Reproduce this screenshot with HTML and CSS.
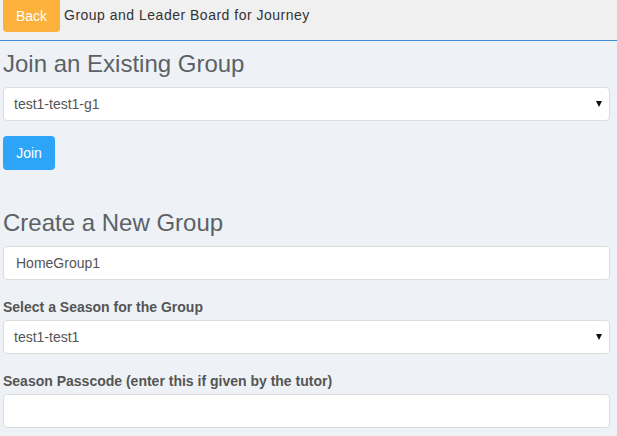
FILE: index.html
```html
<!DOCTYPE html>
<html>
<head>
<meta charset="utf-8">
<link rel="stylesheet" href="styles.css">
</head>
<body>
<header class="topbar">
  <button class="btn btn-back">Back</button>
  <span class="title">Group and Leader Board for Journey</span>
</header>
<main class="content">
  <h2 class="heading">Join an Existing Group</h2>
  <div class="select-wrap">
    <div class="select-box">test1-test1-g1</div>
    <span class="caret"></span>
  </div>
  <button class="btn btn-join">Join</button>

  <h2 class="heading heading-create">Create a New Group</h2>
  <div class="input-box">HomeGroup1</div>

  <label class="label">Select a Season for the Group</label>
  <div class="select-wrap">
    <div class="select-box">test1-test1</div>
    <span class="caret"></span>
  </div>

  <label class="label">Season Passcode (enter this if given by the tutor)</label>
  <div class="input-box"></div>
</main>
</body>
</html>
```
FILE: styles.css
```css
* { box-sizing: border-box; }
html, body {
  margin: 0;
  padding: 0;
  background: #eef2f6;
  font-family: "Liberation Sans", Arial, sans-serif;
  height: 436px;
  overflow: hidden;
}
.topbar {
  height: 41px;
  background: #f0f0f0;
  border-bottom: 1px solid #3d8ed8;
  display: flex;
  align-items: flex-start;
  padding-left: 3px;
}
.btn {
  border: none;
  color: #fff;
  font-family: "Liberation Sans", Arial, sans-serif;
  font-size: 14px;
  cursor: pointer;
  padding: 0;
}
.btn-back {
  width: 57px;
  height: 32px;
  background: #fbb13c;
  border-radius: 0 0 4px 4px;
  padding-bottom: 1px;
}
.title {
  margin-left: 4px;
  margin-top: 6px;
  font-size: 14px;
  line-height: 18px;
  color: #333;
  letter-spacing: 0.5px;
}
.content {
  padding: 0 7px 0 3px;
  display: flex;
  flex-direction: column;
  align-items: stretch;
}
.heading {
  margin: 10px 0 10px 0;
  font-size: 24px;
  line-height: 26px;
  font-weight: normal;
  color: #5c6166;
}
.heading-create {
  margin-top: 40px;
}
.select-wrap {
  position: relative;
}
.select-box, .input-box {
  height: 34px;
  background: #fff;
  border: 1px solid #dcdcdc;
  border-radius: 4px;
  font-size: 14px;
  line-height: 32px;
  color: #555;
}
.select-box { padding-left: 10px; }
.input-box { padding-left: 12px; }
.caret {
  position: absolute;
  right: 8px;
  top: 14px;
  width: 0;
  height: 0;
  border-left: 3.5px solid transparent;
  border-right: 3.5px solid transparent;
  border-top: 6px solid #111;
}
.btn-join {
  align-self: flex-start;
  margin-top: 15px;
  width: 52px;
  height: 34px;
  background: #2ea4f8;
  border-radius: 4px;
}
.label {
  margin-top: 18px;
  margin-bottom: 4px;
  font-size: 14px;
  line-height: 18px;
  font-weight: bold;
  color: #555;
}
```
